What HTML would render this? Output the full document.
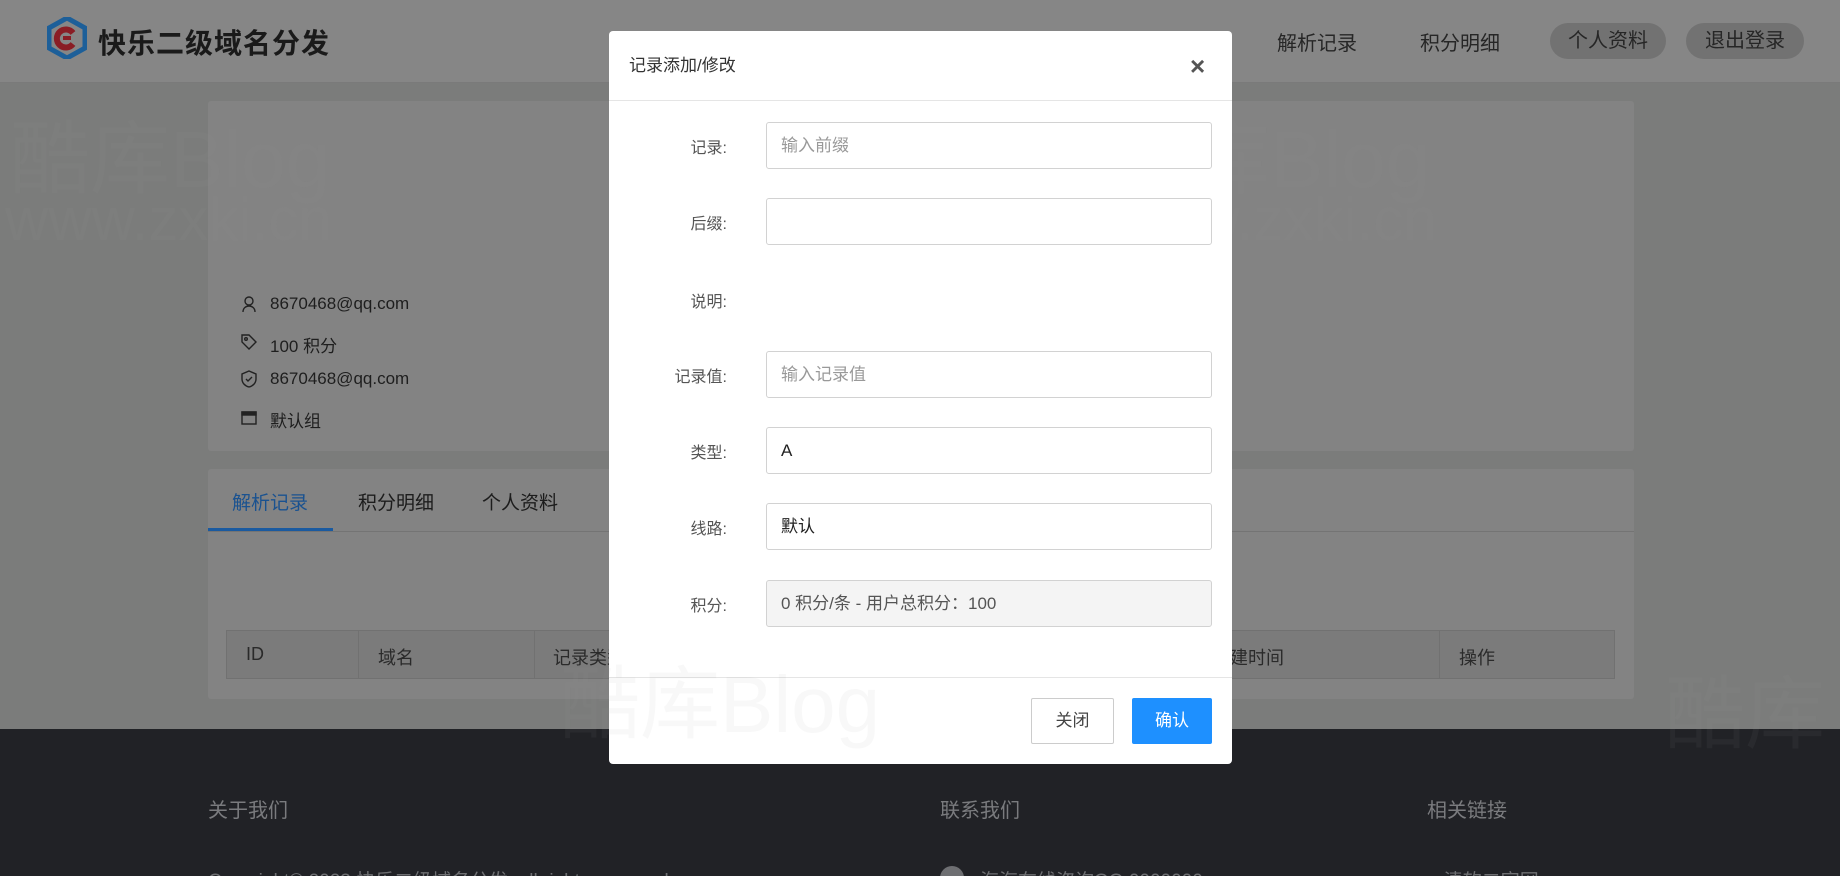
<!DOCTYPE html>
<html style="overflow:hidden;width:1840px;height:876px"><head><meta charset="utf-8">
<style>
*{margin:0;padding:0;box-sizing:border-box}
body{width:1840px;height:876px;overflow:hidden;position:relative;background:#7b7c7b;font-family:"Liberation Sans","Noto Sans CJK SC",sans-serif;color:#1c1c1c}
.abs{position:absolute}
.hdr{left:0;top:0;width:1840px;height:83px;background:#868686;border-bottom:1px solid #7a7a7a}
.logo{left:98px;top:22px;font-size:28px;font-weight:bold;color:#1a1a1a;letter-spacing:1px}
.nav{font-size:20px;color:#262626;top:27px}
.pill{top:23px;height:36px;border-radius:18px;background:#727272;font-size:20px;color:#262626;text-align:center;line-height:36px}
.card{background:#838383;border-radius:3px}
.info{left:270px;font-size:17px;color:#1e1e1e}
.ico{left:240px;width:18px;height:18px}
.tab{top:488px;font-size:19px;color:#1c1c1c}
.th{font-size:18px;color:#2a2a2a;top:644px}
.foot{left:0;top:729px;width:1840px;height:147px;background:#212226;overflow:hidden}
.ft{top:65px;font-size:20px;color:#7a7b7e}
.modal{left:609px;top:31px;width:623px;height:733px;background:#fff;border-radius:4px}
.lab{width:118px;text-align:right;font-size:16px;color:#555;left:0}
.inp{left:157px;width:446px;height:47px;border:1px solid #d2d2d2;border-radius:3px;font-size:17px;line-height:45px;padding-left:14px;color:#999}
.wm{font-size:80px;color:rgba(150,150,150,.07);font-family:"Liberation Sans","Noto Sans CJK SC",sans-serif}
</style></head><body>
<div class="abs hdr"></div>
<svg class="abs" style="left:47px;top:17px" width="40" height="42" viewBox="0 0 40 42">
<polygon points="20,1 38,11 38,31 20,41 2,31 2,11" fill="none" stroke="#1d5f99" stroke-width="5"/>
<path d="M26 16 A9 9 0 1 0 26 27" fill="none" stroke="#8a1d25" stroke-width="6"/>
<rect x="16" y="19" width="8" height="4" fill="#8a1d25"/>
</svg>
<div class="abs logo">快乐二级域名分发</div>
<div class="abs nav" style="left:1277px">解析记录</div>
<div class="abs nav" style="left:1420px">积分明细</div>
<div class="abs pill" style="left:1550px;width:116px">个人资料</div>
<div class="abs pill" style="left:1686px;width:118px">退出登录</div>

<div class="abs card" style="left:208px;top:101px;width:1426px;height:350px"></div>
<svg class="abs ico" style="top:295px" viewBox="0 0 18 18" fill="none" stroke="#222" stroke-width="1.4"><circle cx="9" cy="6" r="4"/><path d="M3 17c0-4 3-6 6-6s6 2 6 6"/></svg>
<div class="abs info" style="top:294px">8670468@qq.com</div>
<svg class="abs ico" style="top:333px" viewBox="0 0 18 18" fill="none" stroke="#222" stroke-width="1.4"><path d="M2 2h7l7 7-7 7-7-7z"/><circle cx="6" cy="6" r="1.3"/></svg>
<div class="abs info" style="top:332px">100 积分</div>
<svg class="abs ico" style="top:370px" viewBox="0 0 18 18" fill="none" stroke="#222" stroke-width="1.4"><path d="M9 1l7 3v5c0 4-3 7-7 8-4-1-7-4-7-8V4z"/><path d="M6 9l2 2 4-4"/></svg>
<div class="abs info" style="top:369px">8670468@qq.com</div>
<svg class="abs ico" style="top:409px" viewBox="0 0 18 18" fill="none" stroke="#222" stroke-width="1.4"><rect x="2" y="3" width="14" height="12"/><rect x="2" y="3" width="14" height="3" fill="#222"/></svg>
<div class="abs info" style="top:407px">默认组</div>

<div class="abs card" style="left:208px;top:469px;width:1426px;height:230px"></div>
<div class="abs tab" style="left:232px;color:#1a5290">解析记录</div>
<div class="abs tab" style="left:358px">积分明细</div>
<div class="abs tab" style="left:482px">个人资料</div>
<div class="abs" style="left:208px;top:531px;width:1426px;height:1px;background:#747474"></div>
<div class="abs" style="left:208px;top:528px;width:125px;height:3px;background:#1a5aa0"></div>
<div class="abs" style="left:226px;top:630px;width:1389px;height:49px;background:#7b7b7b;border:1px solid #717171"></div>
<div class="abs" style="left:358px;top:630px;width:1px;height:49px;background:#717171"></div>
<div class="abs" style="left:534px;top:630px;width:1px;height:49px;background:#717171"></div>
<div class="abs" style="left:1439px;top:630px;width:1px;height:49px;background:#717171"></div>
<div class="abs th" style="left:246px">ID</div>
<div class="abs th" style="left:378px">域名</div>
<div class="abs th" style="left:553px">记录类型</div>
<div class="abs th" style="left:1212px">创建时间</div>
<div class="abs th" style="left:1459px">操作</div>

<div class="abs foot">
<div class="abs ft" style="left:208px">关于我们</div>
<div class="abs ft" style="left:940px">联系我们</div>
<div class="abs ft" style="left:1427px">相关链接</div>
<div class="abs" style="left:208px;top:137px;font-size:19px;color:#6e6f72">Copyright© 2023 快乐二级域名分发. all rights reserved.</div>
<div class="abs" style="left:940px;top:137px;width:24px;height:24px;border-radius:12px;background:#6e6f72"></div>
<div class="abs" style="left:980px;top:137px;font-size:19px;color:#6e6f72">海海在线咨询QQ:0000000</div>
<div class="abs" style="left:1427px;top:137px;font-size:19px;color:#6e6f72">⌂ 清软二官网</div>
</div>

<div class="abs wm" style="left:10px;top:95px">酷库Blog</div>
<div class="abs wm" style="left:5px;top:185px;font-size:60px">www.zxki.cn</div>
<div class="abs wm" style="left:1110px;top:95px">酷库Blog</div>
<div class="abs wm" style="left:1110px;top:185px;font-size:60px">www.zxki.cn</div>
<div class="abs wm" style="left:1665px;top:650px">酷库</div>

<div class="abs modal">
<div class="abs" style="left:20px;top:20px;font-size:17px;color:#333">记录添加/修改</div>
<div class="abs" style="left:581px;top:20px;font-size:26px;color:#555;font-weight:bold">×</div>
<div class="abs" style="left:0;top:69px;width:623px;height:1px;background:#e5e5e5"></div>
<div class="abs lab" style="top:103px">记录:</div>
<div class="abs inp" style="top:91px">输入前缀</div>
<div class="abs lab" style="top:179px">后缀:</div>
<div class="abs inp" style="top:167px"></div>
<div class="abs lab" style="top:257px">说明:</div>
<div class="abs lab" style="top:332px">记录值:</div>
<div class="abs inp" style="top:320px">输入记录值</div>
<div class="abs lab" style="top:408px">类型:</div>
<div class="abs inp" style="top:396px;color:#222">A</div>
<div class="abs lab" style="top:484px">线路:</div>
<div class="abs inp" style="top:472px;color:#222">默认</div>
<div class="abs lab" style="top:561px">积分:</div>
<div class="abs inp" style="top:549px;background:#f4f4f4;color:#555">0 积分/条 - 用户总积分：100</div>
<div class="abs" style="left:0;top:646px;width:623px;height:1px;background:#e5e5e5"></div>
<div class="abs" style="left:422px;top:667px;width:83px;height:46px;border:1px solid #ccc;border-radius:2px;text-align:center;line-height:44px;font-size:17px;color:#444">关闭</div>
<div class="abs" style="left:523px;top:667px;width:80px;height:46px;background:#1e90ff;border-radius:2px;text-align:center;line-height:46px;font-size:17px;color:#fff">确认</div>
</div>
<div class="abs wm" style="left:560px;top:640px;color:rgba(150,150,150,.07)">酷库Blog</div>
</body></html>
